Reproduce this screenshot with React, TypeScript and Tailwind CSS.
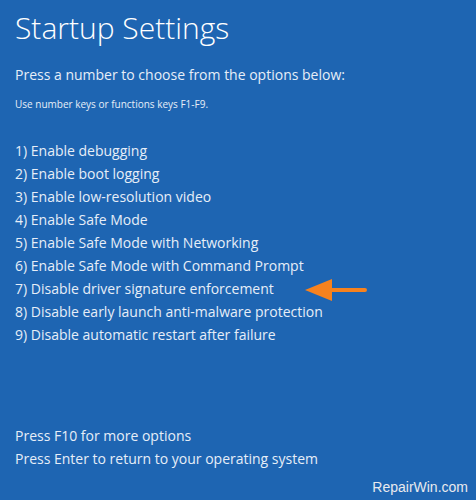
import React from 'react';

const options = [
  '1) Enable debugging',
  '2) Enable boot logging',
  '3) Enable low-resolution video',
  '4) Enable Safe Mode',
  '5) Enable Safe Mode with Networking',
  '6) Enable Safe Mode with Command Prompt',
  '7) Disable driver signature enforcement',
  '8) Disable early launch anti-malware protection',
  '9) Disable automatic restart after failure',
];

const App: React.FC = () => {
  return (
    <div
      className="w-[476px] h-[500px] bg-[#1e65b2] text-[#e6eef8] flex flex-col overflow-hidden"
      style={{ fontFamily: '"Open Sans", "Noto Sans", sans-serif' }}
    >
      <div className="pl-[15px] pt-[9px] flex flex-col">
        <h1 className="text-[30px] leading-[38px] font-light text-white">Startup Settings</h1>
        <p className="mt-[18px] text-[14px] leading-[20px]">Press a number to choose from the options below:</p>
        <p className="mt-[12px] text-[10px] leading-[14px]">Use number keys or functions keys F1-F9.</p>

        <ul className="mt-[28px] flex flex-col text-[14px]">
          {options.map((o, i) => (
            <li key={i} className="h-[23px] leading-[23px] flex items-center">
              <span>{o}</span>
              {i === 6 && (
                <svg className="ml-[30px] mt-[2px]" width="63" height="24" viewBox="0 0 63 24">
                  <path d="M26 12 H61" stroke="#f7821e" strokeWidth="4" strokeLinecap="round" />
                  <path d="M1 12 L28 1 L28 23 Z" fill="#f7821e" />
                </svg>
              )}
            </li>
          ))}
        </ul>
      </div>

      <div className="mt-auto mb-[7px] pl-[15px] flex flex-col text-[14px]">
        <p className="leading-[23px]">Press F10 for more options</p>
        <p className="leading-[23px]">Press Enter to return to your operating system</p>
      </div>
      <div
        className="self-end pr-[8px] pb-[3px] text-[14px] leading-[20px] text-[#e8eaee]"
        style={{ fontFamily: '"Liberation Sans", Arial, sans-serif' }}
      >
        RepairWin.com
      </div>
    </div>
  );
};

export default App;
